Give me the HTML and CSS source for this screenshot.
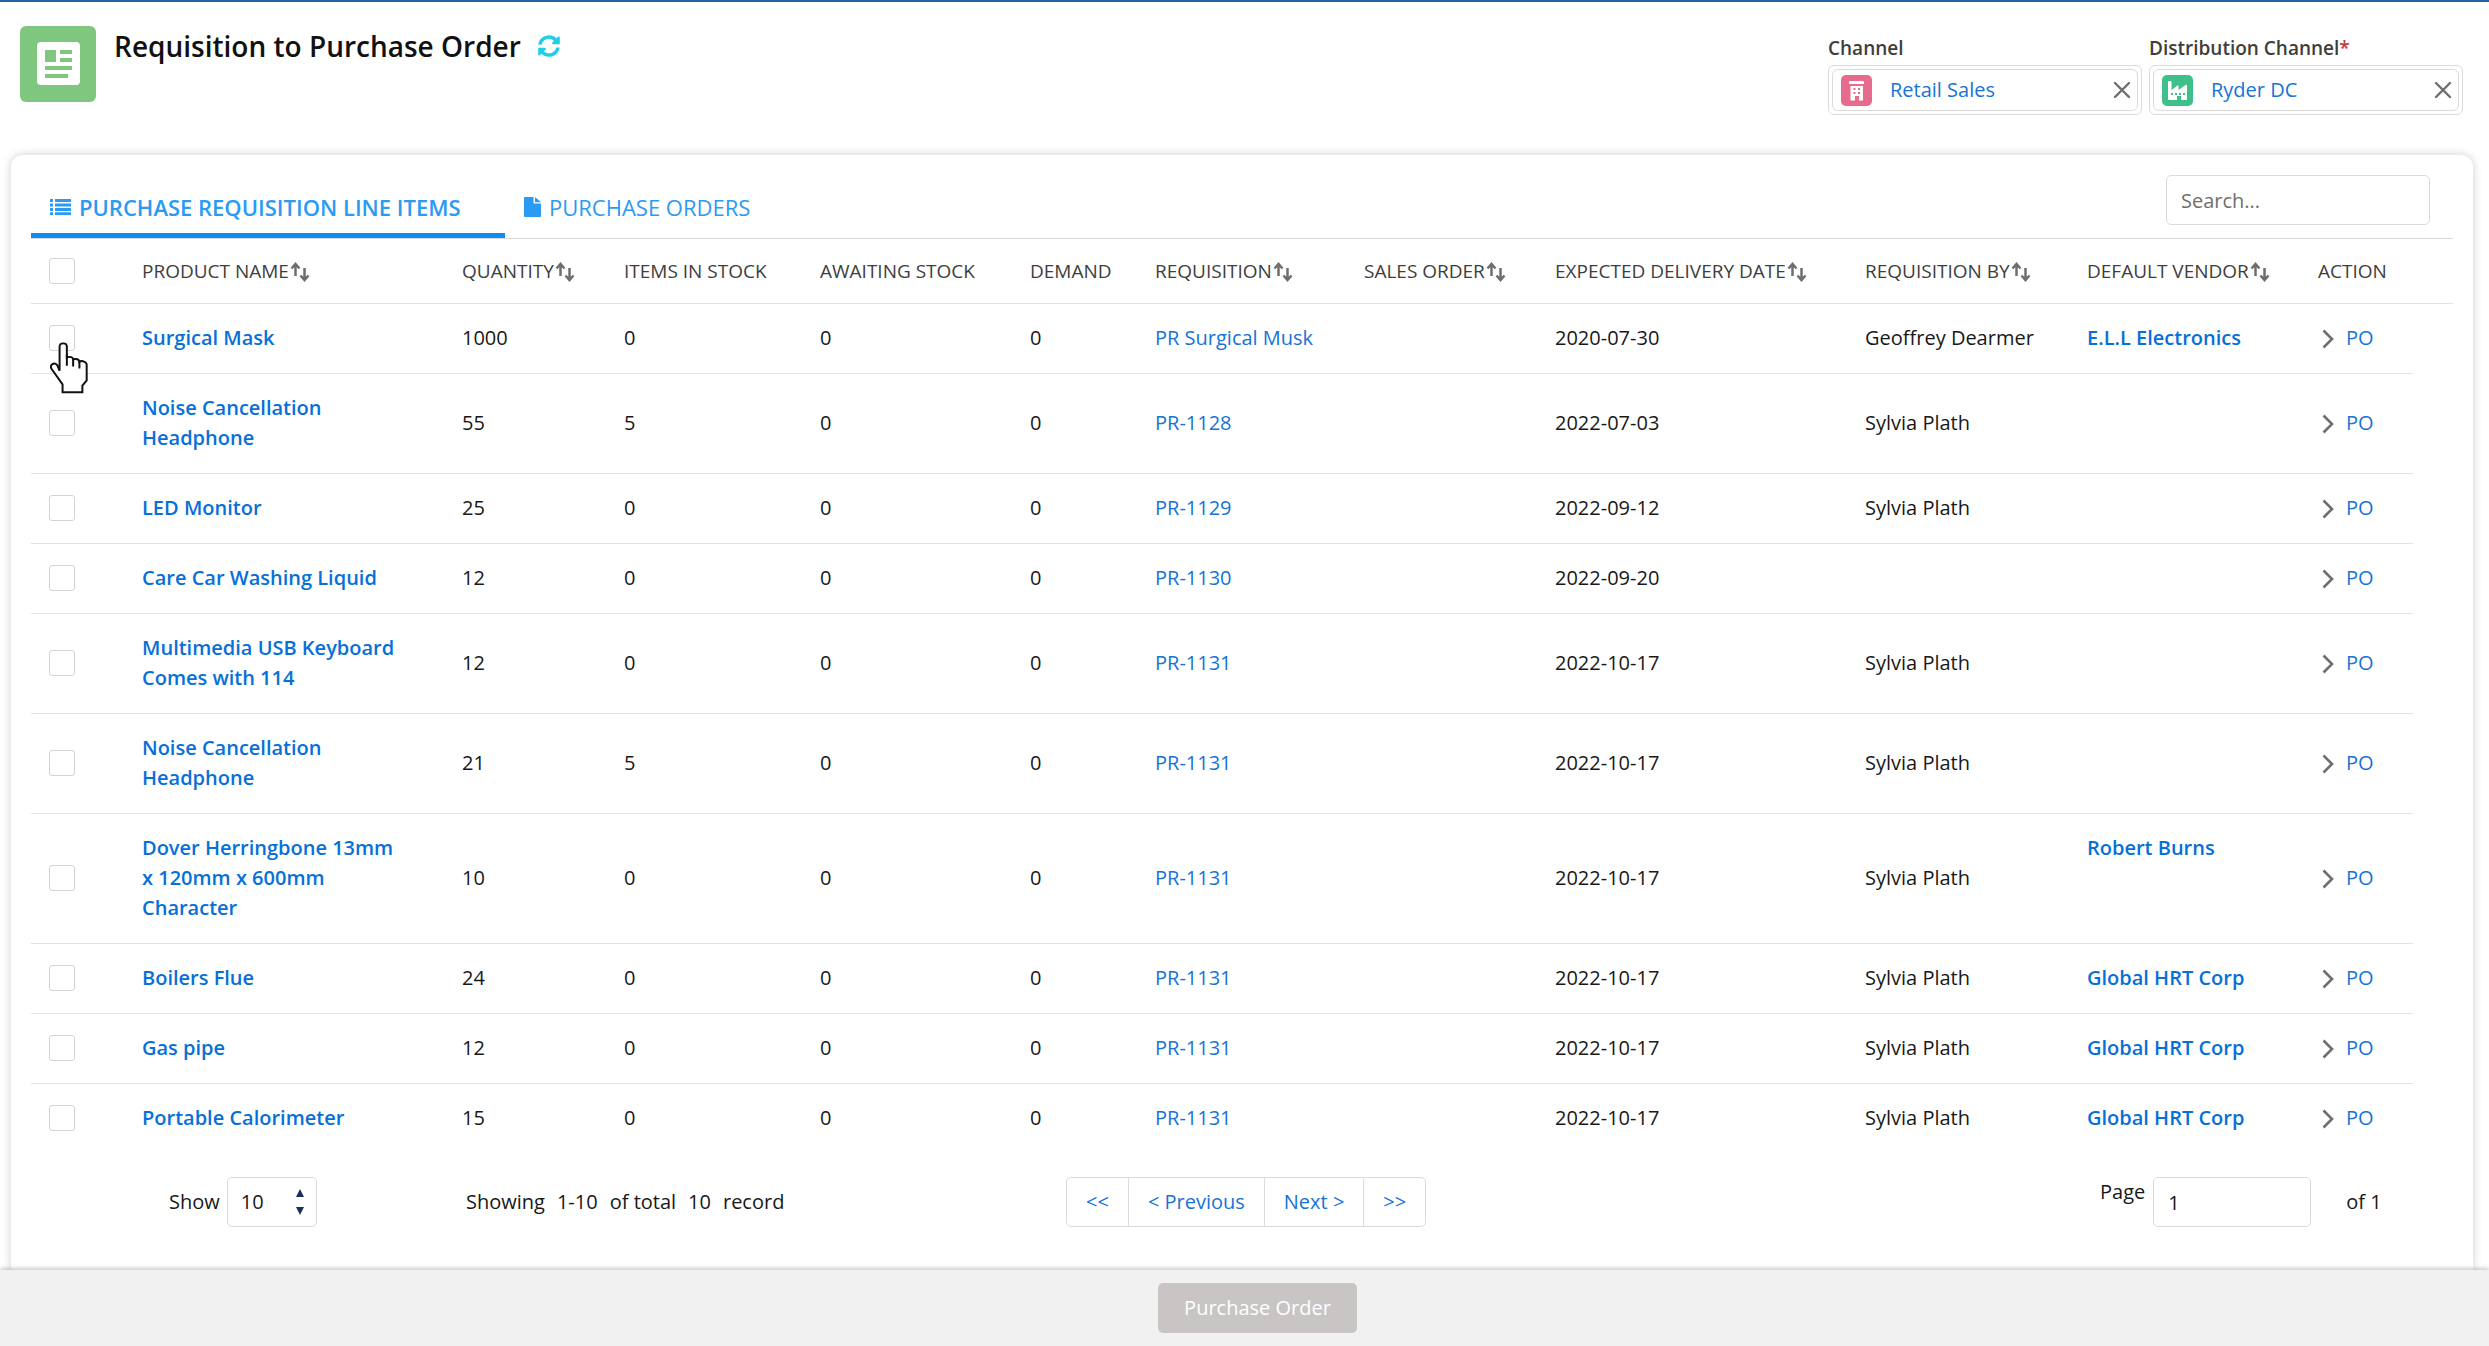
FILE: index.html
```html
<!DOCTYPE html>
<html lang="en">
<head>
<meta charset="utf-8">
<title>Requisition to Purchase Order</title>
<link rel="stylesheet" href="styles.css">
</head>
<body>
<svg class="sprite" aria-hidden="true">
  <symbol id="sort" viewBox="0 0 20 20"><path d="M5.500 14V3M1.500 6.500l4-4.500 4 4.500M14.500 6v11M10.500 13.500l4 4.500 4-4.500" fill="none" stroke="currentColor" stroke-width="2.500"/></symbol>
  <symbol id="chevron" viewBox="0 0 12 20"><path d="M1.500 1.500L10 10l-8.500 8.500" fill="none" stroke="currentColor" stroke-width="2.600"/></symbol>
  <symbol id="close" viewBox="0 0 18 18"><path d="M2 2l14 14M16 2L2 16" fill="none" stroke="currentColor" stroke-width="2.400" stroke-linecap="round"/></symbol>
</svg>
<header class="page-header">
  <svg class="page-icon" viewBox="0 0 76 76" aria-hidden="true">
    <rect width="76" height="76" rx="6" fill="#7fc67e"/>
    <rect x="17" y="16" width="43" height="43" rx="4" fill="#fff"/>
    <path d="M25 24h11v12H25zM40 24h12v4H40zM40 32h12v4H40zM25 40h27v4H25zM25 48h23v4H25z" fill="#7fc67e"/>
  </svg>
  <h1>Requisition to Purchase Order</h1>
  <button class="refresh" type="button" aria-label="Refresh">
    <svg viewBox="0 0 512 512"><path fill="currentColor" d="M371 133c-32-31-73-48-117-48-79 0-147 54-166 130-1 5-6 9-12 9H19c-8 0-14-7-12-14C28 93 132 4 256 4c68 0 130 27 175 71l36-36c15-15 41-4 41 17v134c0 13-11 24-24 24H350c-21 0-32-26-17-41zM28 296h134c21 0 32 26 17 41l-41 42c32 31 74 48 118 48 79 0 147-54 166-130 1-5 6-9 12-9h57c8 0 13 7 12 14-21 118-125 206-249 206-68 0-130-27-175-71l-36 36c-15 15-39 4-39-17V320c0-13 11-24 24-24z"/></svg>
  </button>
  <div class="lookups">
    <div class="field">
      <label for="channel">Channel</label>
      <div class="lookup"><div class="pill">
        <svg class="pill-icon" viewBox="0 0 31 31" aria-hidden="true"><rect width="31" height="31" rx="5" fill="#e76b8d"/><path fill="#fff" fill-rule="evenodd" d="M9 6h13q1 0 1 1v2H8V7q0-1 1-1zM9.500 11h12.500v14.500h-4V21h-4v4.500H9.500zM12.500 13v2h2v-2zM17 13v2h2v-2zM12.500 17v2h2v-2zM17 17v2h2v-2z"/></svg>
        <input id="channel" type="text" value="Retail Sales">
        <button type="button" aria-label="Clear channel"><svg><use href="#close"/></svg></button>
      </div></div>
    </div>
    <div class="field">
      <label for="dc">Distribution Channel<span class="req">*</span></label>
      <div class="lookup"><div class="pill">
        <svg class="pill-icon" viewBox="0 0 31 31" aria-hidden="true"><rect width="31" height="31" rx="5" fill="#3fbf8a"/><path fill="#fff" fill-rule="evenodd" d="M6 7q0-1 1-1h1.500q1 0 1 1v8l6-4.500q1-.5 1 .5v4l7-5q1.500-.7 1.500 1V24q0 1-1 1h-5v-4h-4v4H7q-1 0-1-1zM9 18v2h2v-2zM13 18v2h2v-2zM17 18v2h2v-2zM21 18v2h2v-2z"/></svg>
        <input id="dc" type="text" value="Ryder DC">
        <button type="button" aria-label="Clear distribution channel"><svg><use href="#close"/></svg></button>
      </div></div>
    </div>
  </div>
</header>
<main class="card">
  <div class="toolbar">
    <nav class="tabs">
      <a class="tab active" href="#items"><svg viewBox="0 0 21 16" aria-hidden="true"><path fill="currentColor" d="M0 0h3v3H0zM5 0h16v3H5zM0 4.500h3v3H0zM5 4.500h16v3H5zM0 9h3v3H0zM5 9h16v3H5zM0 13.300h3v3H0zM5 13.300h16v3H5z"/></svg>PURCHASE REQUISITION LINE ITEMS</a>
      <a class="tab" href="#orders"><svg class="file" viewBox="0 0 17 20" aria-hidden="true"><path fill="currentColor" d="M0 1q0-1 1-1h8.500v6.500H17V19q0 1-1 1H1q-1 0-1-1zM11 0l6 5.300h-6z"/></svg>PURCHASE ORDERS</a>
    </nav>
    <input class="search" type="search" placeholder="Search..." aria-label="Search">
  </div>
  <table class="items" id="items">
    <colgroup><col class="c-check"><col class="c-name"><col class="c-qty"><col class="c-stock"><col class="c-await"><col class="c-demand"><col class="c-req"><col class="c-sales"><col class="c-date"><col class="c-by"><col class="c-vendor"><col class="c-action"><col class="c-end"></colgroup>
    <thead><tr>
      <th class="check"><input type="checkbox" aria-label="Select all"></th>
      <th>PRODUCT NAME<svg><use href="#sort"/></svg></th>
      <th>QUANTITY<svg><use href="#sort"/></svg></th>
      <th>ITEMS IN STOCK</th><th>AWAITING STOCK</th><th>DEMAND</th>
      <th>REQUISITION<svg><use href="#sort"/></svg></th>
      <th>SALES ORDER<svg><use href="#sort"/></svg></th>
      <th>EXPECTED DELIVERY DATE<svg><use href="#sort"/></svg></th>
      <th>REQUISITION BY<svg><use href="#sort"/></svg></th>
      <th>DEFAULT VENDOR<svg><use href="#sort"/></svg></th>
      <th colspan="2">ACTION</th>
    </tr></thead>
    <tbody>
      <tr><td class="check"><input type="checkbox" aria-label="Select Surgical Mask"><svg class="pointer" viewBox="90 515 115 155" aria-hidden="true"><path d="M119 601V528q0-10 11-10t11 10v32q17-4 19 6 17-4 19 8 6-5 14-1 8 3 8 10v47l-13 16v20h-60v-24L94 594q-4-8 3-13 8-5 15 3l7 17" fill="#fff" stroke="#111" stroke-width="6"/><path d="M141 586v-34M160 588v-26M179 594v-24" stroke="#111" stroke-width="6"/></svg></td><td class="name"><a href="#">Surgical Mask</a></td><td>1000</td><td>0</td><td>0</td><td>0</td><td><a href="#">PR Surgical Musk</a></td><td></td><td>2020-07-30</td><td>Geoffrey Dearmer</td><td class="vendor"><a href="#">E.L.L Electronics</a></td><td class="act"><svg><use href="#chevron"/></svg><a href="#">PO</a></td></tr>
      <tr><td class="check"><input type="checkbox" aria-label="Select Noise Cancellation Headphone"></td><td class="name"><a href="#">Noise Cancellation Headphone</a></td><td>55</td><td>5</td><td>0</td><td>0</td><td><a href="#">PR-1128</a></td><td></td><td>2022-07-03</td><td>Sylvia Plath</td><td class="vendor"></td><td class="act"><svg><use href="#chevron"/></svg><a href="#">PO</a></td></tr>
      <tr><td class="check"><input type="checkbox" aria-label="Select LED Monitor"></td><td class="name"><a href="#">LED Monitor</a></td><td>25</td><td>0</td><td>0</td><td>0</td><td><a href="#">PR-1129</a></td><td></td><td>2022-09-12</td><td>Sylvia Plath</td><td class="vendor"></td><td class="act"><svg><use href="#chevron"/></svg><a href="#">PO</a></td></tr>
      <tr><td class="check"><input type="checkbox" aria-label="Select Care Car Washing Liquid"></td><td class="name"><a href="#">Care Car Washing Liquid</a></td><td>12</td><td>0</td><td>0</td><td>0</td><td><a href="#">PR-1130</a></td><td></td><td>2022-09-20</td><td></td><td class="vendor"></td><td class="act"><svg><use href="#chevron"/></svg><a href="#">PO</a></td></tr>
      <tr><td class="check"><input type="checkbox" aria-label="Select Multimedia USB Keyboard"></td><td class="name"><a href="#">Multimedia USB Keyboard Comes with 114</a></td><td>12</td><td>0</td><td>0</td><td>0</td><td><a href="#">PR-1131</a></td><td></td><td>2022-10-17</td><td>Sylvia Plath</td><td class="vendor"></td><td class="act"><svg><use href="#chevron"/></svg><a href="#">PO</a></td></tr>
      <tr><td class="check"><input type="checkbox" aria-label="Select Noise Cancellation Headphone"></td><td class="name"><a href="#">Noise Cancellation Headphone</a></td><td>21</td><td>5</td><td>0</td><td>0</td><td><a href="#">PR-1131</a></td><td></td><td>2022-10-17</td><td>Sylvia Plath</td><td class="vendor"></td><td class="act"><svg><use href="#chevron"/></svg><a href="#">PO</a></td></tr>
      <tr><td class="check"><input type="checkbox" aria-label="Select Dover Herringbone"></td><td class="name"><a href="#">Dover Herringbone 13mm x 120mm x 600mm Character</a></td><td>10</td><td>0</td><td>0</td><td>0</td><td><a href="#">PR-1131</a></td><td></td><td>2022-10-17</td><td>Sylvia Plath</td><td class="vendor"><a href="#">Robert Burns</a></td><td class="act"><svg><use href="#chevron"/></svg><a href="#">PO</a></td></tr>
      <tr><td class="check"><input type="checkbox" aria-label="Select Boilers Flue"></td><td class="name"><a href="#">Boilers Flue</a></td><td>24</td><td>0</td><td>0</td><td>0</td><td><a href="#">PR-1131</a></td><td></td><td>2022-10-17</td><td>Sylvia Plath</td><td class="vendor"><a href="#">Global HRT Corp</a></td><td class="act"><svg><use href="#chevron"/></svg><a href="#">PO</a></td></tr>
      <tr><td class="check"><input type="checkbox" aria-label="Select Gas pipe"></td><td class="name"><a href="#">Gas pipe</a></td><td>12</td><td>0</td><td>0</td><td>0</td><td><a href="#">PR-1131</a></td><td></td><td>2022-10-17</td><td>Sylvia Plath</td><td class="vendor"><a href="#">Global HRT Corp</a></td><td class="act"><svg><use href="#chevron"/></svg><a href="#">PO</a></td></tr>
      <tr><td class="check"><input type="checkbox" aria-label="Select Portable Calorimeter"></td><td class="name"><a href="#">Portable Calorimeter</a></td><td>15</td><td>0</td><td>0</td><td>0</td><td><a href="#">PR-1131</a></td><td></td><td>2022-10-17</td><td>Sylvia Plath</td><td class="vendor"><a href="#">Global HRT Corp</a></td><td class="act"><svg><use href="#chevron"/></svg><a href="#">PO</a></td></tr>
    </tbody>
  </table>
  <div class="pager">
    <div class="show">
      <label for="size">Show</label>
      <div class="size">
        <select id="size"><option>10</option><option>25</option><option>50</option></select>
        <svg viewBox="0 0 8 26" aria-hidden="true"><path d="M4 0l4 8H0zM0 18h8l-4 8z" fill="#16325c"/></svg>
      </div>
    </div>
    <div class="summary"><span>Showing</span><span>1-10</span><span>of total</span><span>10</span><span>record</span></div>
    <div class="steps">
      <button type="button">&lt;&lt;</button><button type="button">&lt; Previous</button><button type="button">Next &gt;</button><button type="button">&gt;&gt;</button>
    </div>
    <div class="goto">
      <label for="page">Page</label>
      <input id="page" type="text" value="1">
      <span>of 1</span>
    </div>
  </div>
</main>
<footer class="actions"><button type="button" disabled>Purchase Order</button></footer>
</body>
</html>
```

FILE: styles.css
```css
* { box-sizing: border-box; }

body {
  margin: 0;
  min-height: 100vh;
  display: flex;
  flex-direction: column;
  border-top: 2px solid #2462a2;
  background: #fff;
  color: #181818;
  font: 20px/30px "Open Sans", "Noto Sans", sans-serif;
}

a { color: #1673d8; text-decoration: none; }
button, input, select { font: inherit; color: inherit; }
button { padding: 0; border: 0; background: none; }
.sprite { display: none; }

.page-header {
  display: flex;
  align-items: flex-start;
  padding: 24px 26px 28px 20px;
}
.page-icon { width: 76px; height: 76px; flex: none; }
h1 { margin: 0 17px 0 18px; font-size: 28px; line-height: 40px; font-weight: 600; color: #111; }
.refresh { height: 40px; color: #1fcfe8; display: flex; align-items: center; }
.refresh svg { width: 22px; height: 22px; }

.lookups { display: flex; gap: 7px; margin-left: auto; }
.field { width: 314px; }
.field label { display: block; padding-top: 5px; line-height: 34px; font-size: 19px; font-weight: 600; color: #3e3e3c; }
.req { color: #c23934; }
.lookup { padding: 3px; border: 1px solid #dddbda; border-radius: 6px; }
.pill {
  display: flex;
  align-items: center;
  height: 42px;
  padding: 0 6px 0 8px;
  border: 1px solid #dddbda;
  border-radius: 6px;
}
.pill-icon { width: 31px; height: 31px; flex: none; }
.pill input { flex: 1; min-width: 0; margin-left: 18px; padding: 0; border: 0; outline: 0; color: #1673d8; background: none; }
.pill button { display: flex; color: #706e6b; }
.pill button svg { width: 18px; height: 18px; }

.card {
  flex: 1;
  margin: 12px 16px 0 11px;
  padding: 20px 20px 0;
  border-radius: 12px 12px 0 0;
  box-shadow: 0 0 10px rgba(0, 0, 0, 0.2);
}
.toolbar {
  display: flex;
  justify-content: space-between;
  align-items: flex-start;
  height: 64px;
  border-bottom: 1px solid #dddbda;
}
.tabs { display: flex; }
.tab {
  display: flex;
  align-items: center;
  height: 63px;
  padding: 0 19px;
  color: #2b9af3;
  font-size: 22px;
}
.tab.active { min-width: 474px; border-bottom: 5px solid #0f8cf0; padding-top: 5px; font-weight: 600; }
.tab svg { width: 21px; height: 16px; margin-right: 8px; }
.tab .file { width: 17px; height: 20px; }
.search {
  width: 264px;
  height: 50px;
  margin-right: 23px;
  padding: 0 14px;
  border: 1px solid #dddbda;
  border-radius: 5px;
  background: #fff;
}
.search::placeholder { color: #706e6b; opacity: 1; }

.items { width: 100%; border-collapse: collapse; table-layout: fixed; }
.c-check { width: 99px; }
.c-name { width: 320px; }
.c-qty { width: 162px; }
.c-stock { width: 196px; }
.c-await { width: 210px; }
.c-demand { width: 125px; }
.c-req { width: 209px; }
.c-sales { width: 191px; }
.c-date { width: 310px; }
.c-by { width: 222px; }
.c-vendor { width: 231px; }
.c-action { width: 107px; }
.c-end { width: 40px; }
.items th, .items td {
  padding: 0 0 0 12px;
  border-bottom: 1px solid #dde6e4;
  text-align: left;
  white-space: nowrap;
}
.items th { height: 64px; font-size: 19px; font-weight: 500; color: #3e3e3c; }
.items th svg { width: 20px; height: 20px; vertical-align: -4px; margin-left: 1px; color: #706e6b; }
.items td { height: 70px; }
.items tbody tr:last-child td { border-bottom: 0; }
.items .name { padding: 19px 44px 20px 12px; white-space: normal; font-weight: 600; }
.items .vendor { padding-top: 19px; vertical-align: top; font-weight: 600; }
.name a, .vendor a { color: #0670d9; }
.items .check { position: relative; padding-left: 18px; }
.check input {
  display: block;
  width: 26px;
  height: 26px;
  margin: 0;
  appearance: none;
  border: 1px solid #d4d4d4;
  border-radius: 3px;
  background: #fff;
}
.pointer { position: absolute; left: 19px; top: 38px; width: 38px; height: 52px; z-index: 1; }
.act svg { width: 12px; height: 20px; margin: 0 12px 0 4px; vertical-align: -4px; color: #706e6b; }

.pager {
  display: grid;
  grid-template-columns: 435fr 600fr 1034fr 353fr;
  align-items: center;
  padding: 24px 0 42px;
}
.show { display: flex; align-items: center; gap: 7px; padding-left: 138px; }
.size { position: relative; }
.size select {
  width: 90px;
  height: 50px;
  padding: 0 13px;
  appearance: none;
  border: 1px solid #dddbda;
  border-radius: 5px;
  background: #fff;
}
.size svg { position: absolute; right: 13px; top: 12px; width: 8px; height: 26px; pointer-events: none; }
.summary { display: flex; gap: 12px; white-space: nowrap; }
.steps { display: flex; height: 50px; }
.steps button {
  padding: 0 19px;
  margin-left: -1px;
  border: 1px solid #dddbda;
  color: #1673d8;
}
.steps button:first-child { margin-left: 0; border-radius: 5px 0 0 5px; }
.steps button:last-child { border-radius: 0 5px 5px 0; }
.goto { display: flex; align-items: center; }
.goto label { align-self: flex-start; margin-right: 8px; }
.goto input {
  width: 158px;
  height: 50px;
  margin-right: 35px;
  padding: 0 14px;
  border: 1px solid #dddbda;
  border-radius: 5px;
}

.actions {
  position: relative;
  display: flex;
  justify-content: center;
  padding: 13px 0 13px 26px;
  background: #f1f1f1;
  box-shadow: 0 -2px 4px rgba(0, 0, 0, 0.2);
}
.actions button {
  height: 50px;
  padding: 0 26px;
  border-radius: 5px;
  background: #c9c5c5;
  color: #fff;
}
```
